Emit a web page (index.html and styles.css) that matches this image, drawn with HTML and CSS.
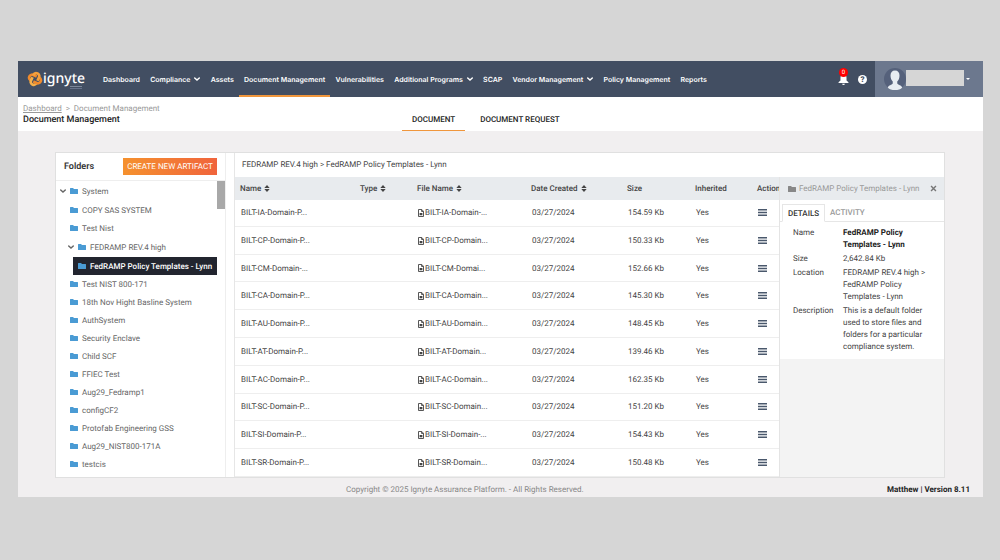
FILE: index.html
```html
<!DOCTYPE html>
<html lang="en">
<head>
    <meta charset="UTF-8">
    <meta name="viewport" content="width=device-width, initial-scale=1.0">
    <title>Document Management</title>
    <link rel="stylesheet" href="styles.css">
</head>
<body>
    <svg class="sprite" aria-hidden="true">
        <symbol id="folder" viewBox="0 0 16 12"><path d="M1 0h5l2 2h7a1 1 0 0 1 1 1v8a1 1 0 0 1-1 1H1a1 1 0 0 1-1-1V1a1 1 0 0 1 1-1z" fill="currentColor"/></symbol>
        <symbol id="chevron" viewBox="0 0 10 6"><path d="M1.200 1.200 5 4.600l3.800-3.400" fill="none" stroke="currentColor" stroke-width="2.400" stroke-linecap="round"/></symbol>
        <symbol id="sort" viewBox="0 0 10 12"><path d="M5 0l4.600 5H.4zM5 12L.4 7h9.200z" fill="currentColor"/></symbol>
        <symbol id="file" viewBox="0 0 12 16"><path d="M1 1h6.500L11 4.500V15H1zM7.200 1v4H11" fill="none" stroke="currentColor" stroke-width="1.800"/><path d="M3.200 8h5.600v4.500H3.200z" fill="currentColor"/></symbol>
        <symbol id="menu" viewBox="0 0 18 14"><path d="M0 1.500h18M0 7h18M0 12.500h18" stroke="currentColor" stroke-width="2.600"/></symbol>
    </svg>

    <div class="app">
        <header class="topbar">
            <a href="#" class="logo">
                <svg class="logo-mark" viewBox="0 0 30 30" fill="none" stroke-width="5">
                    <g transform="rotate(25 15 15)">
                        <path stroke="#f08a2c" d="M16 9.500H9a5.500 5.500 0 0 0-5.500 5.500c0 4 3 6 7 6"/>
                        <path stroke="#f5b04a" d="M9.500 14v7a5.500 5.500 0 0 0 5.500 5.500c4 0 6-3 6-7"/>
                        <path stroke="#f08a2c" d="M14 20.500h7a5.500 5.500 0 0 0 5.500-5.500c0-4-3-6-7-6"/>
                        <path stroke="#f5a03c" d="M20.500 16V9A5.500 5.500 0 0 0 15 3.500c-4 0-6 3-6 7"/>
                    </g>
                </svg>
                <span class="logo-name">ignyte<span class="logo-line"></span></span>
            </a>
            <nav class="nav">
                <a href="#">Dashboard</a>
                <a href="#">Compliance <svg class="chevron"><use href="#chevron"/></svg></a>
                <a href="#">Assets</a>
                <a href="#" class="active">Document Management</a>
                <a href="#">Vulnerabilities</a>
                <a href="#">Additional Programs <svg class="chevron"><use href="#chevron"/></svg></a>
                <a href="#">SCAP</a>
                <a href="#">Vendor Management <svg class="chevron"><use href="#chevron"/></svg></a>
                <a href="#">Policy Management</a>
                <a href="#">Reports</a>
            </nav>
            <div class="tools">
                <button class="bell" aria-label="Notifications">
                    <svg viewBox="0 0 20 20"><path d="M10 1c-4 0-5.500 3-5.500 6v5L1 15v1.500h18V15l-3.500-3V7c0-3-1.500-6-5.500-6zM7.500 17.500a2.500 2.500 0 0 0 5 0z" fill="#fff"/></svg>
                    <span class="badge">0</span>
                </button>
                <button class="help" aria-label="Help">?</button>
            </div>
            <button class="user" aria-label="Account">
                <svg class="avatar" viewBox="0 0 44 44">
                    <circle cx="22" cy="22" r="22" fill="#55617b"/>
                    <path d="M22 5c-6 0-9 4-9 10 0 5 1.500 9 4.500 12v4c-2 3-8 3-10 8 3 4 8 5 14.500 5s11.500-1 14.500-5c-2-5-8-5-10-8v-4c3-3 4.500-7 4.500-12 0-6-3-10-9-10z" fill="#e8edf2"/>
                </svg>
                <span class="user-name"></span>
                <span class="caret"></span>
            </button>
        </header>

        <div class="subbar">
            <div class="heading">
                <div class="crumbs"><a href="#">Dashboard</a> <span class="sep">&gt;</span> Document Management</div>
                <h1>Document Management</h1>
            </div>
            <div class="tabs">
                <button class="tab active">DOCUMENT</button>
                <button class="tab">DOCUMENT REQUEST</button>
            </div>
        </div>

        <main class="panel">
            <aside class="folders">
                <div class="folders-head">
                    <h2>Folders</h2>
                    <button class="create">CREATE NEW ARTIFACT</button>
                </div>
                <div class="tree-box">
                    <ul class="tree">
                        <li class="root open"><svg class="chevron"><use href="#chevron"/></svg><svg class="folder"><use href="#folder"/></svg>System</li>
                        <li><svg class="folder"><use href="#folder"/></svg>COPY SAS SYSTEM</li>
                        <li><svg class="folder"><use href="#folder"/></svg>Test Nist</li>
                        <li class="sub open"><svg class="chevron"><use href="#chevron"/></svg><svg class="folder"><use href="#folder"/></svg>FEDRAMP REV.4 high</li>
                        <li class="selected"><svg class="folder"><use href="#folder"/></svg>FedRAMP Policy Templates - Lynn</li>
                        <li><svg class="folder"><use href="#folder"/></svg>Test NIST 800-171</li>
                        <li><svg class="folder"><use href="#folder"/></svg>18th Nov Hight Basline System</li>
                        <li><svg class="folder"><use href="#folder"/></svg>AuthSystem</li>
                        <li><svg class="folder"><use href="#folder"/></svg>Security Enclave</li>
                        <li><svg class="folder"><use href="#folder"/></svg>Child SCF</li>
                        <li><svg class="folder"><use href="#folder"/></svg>FFIEC Test</li>
                        <li><svg class="folder"><use href="#folder"/></svg>Aug29_Fedramp1</li>
                        <li><svg class="folder"><use href="#folder"/></svg>configCF2</li>
                        <li><svg class="folder"><use href="#folder"/></svg>Protofab Engineering GSS</li>
                        <li><svg class="folder"><use href="#folder"/></svg>Aug29_NIST800-171A</li>
                        <li><svg class="folder"><use href="#folder"/></svg>testcis</li>
                    </ul>
                    <div class="scrollbar"></div>
                </div>
            </aside>

            <section class="content">
                <div class="path">FEDRAMP REV.4 high &gt; FedRAMP Policy Templates - Lynn</div>
                <div class="split">
                    <div class="table-box">
                        <table>
                            <colgroup>
                                <col class="c-name"><col class="c-type"><col class="c-file"><col class="c-date"><col class="c-size"><col class="c-inh"><col>
                            </colgroup>
                            <thead>
                                <tr>
                                    <th>Name <svg class="sort"><use href="#sort"/></svg></th>
                                    <th>Type <svg class="sort"><use href="#sort"/></svg></th>
                                    <th>File Name <svg class="sort"><use href="#sort"/></svg></th>
                                    <th>Date Created <svg class="sort"><use href="#sort"/></svg></th>
                                    <th>Size</th>
                                    <th>Inherited</th>
                                    <th>Action</th>
                                </tr>
                            </thead>
                            <tbody>
                                <tr><td>BILT-IA-Domain-P...</td><td></td><td><svg class="file"><use href="#file"/></svg>BILT-IA-Domain-...</td><td>03/27/2024</td><td>154.59 Kb</td><td>Yes</td><td><button class="menu" aria-label="Actions"><svg><use href="#menu"/></svg></button></td></tr>
                                <tr><td>BILT-CP-Domain-P...</td><td></td><td><svg class="file"><use href="#file"/></svg>BILT-CP-Domain...</td><td>03/27/2024</td><td>150.33 Kb</td><td>Yes</td><td><button class="menu" aria-label="Actions"><svg><use href="#menu"/></svg></button></td></tr>
                                <tr><td>BILT-CM-Domain-...</td><td></td><td><svg class="file"><use href="#file"/></svg>BILT-CM-Domai...</td><td>03/27/2024</td><td>152.66 Kb</td><td>Yes</td><td><button class="menu" aria-label="Actions"><svg><use href="#menu"/></svg></button></td></tr>
                                <tr><td>BILT-CA-Domain-P...</td><td></td><td><svg class="file"><use href="#file"/></svg>BILT-CA-Domain...</td><td>03/27/2024</td><td>145.30 Kb</td><td>Yes</td><td><button class="menu" aria-label="Actions"><svg><use href="#menu"/></svg></button></td></tr>
                                <tr><td>BILT-AU-Domain-P...</td><td></td><td><svg class="file"><use href="#file"/></svg>BILT-AU-Domain...</td><td>03/27/2024</td><td>148.45 Kb</td><td>Yes</td><td><button class="menu" aria-label="Actions"><svg><use href="#menu"/></svg></button></td></tr>
                                <tr><td>BILT-AT-Domain-P...</td><td></td><td><svg class="file"><use href="#file"/></svg>BILT-AT-Domain...</td><td>03/27/2024</td><td>139.46 Kb</td><td>Yes</td><td><button class="menu" aria-label="Actions"><svg><use href="#menu"/></svg></button></td></tr>
                                <tr><td>BILT-AC-Domain-P...</td><td></td><td><svg class="file"><use href="#file"/></svg>BILT-AC-Domain...</td><td>03/27/2024</td><td>162.35 Kb</td><td>Yes</td><td><button class="menu" aria-label="Actions"><svg><use href="#menu"/></svg></button></td></tr>
                                <tr><td>BILT-SC-Domain-P...</td><td></td><td><svg class="file"><use href="#file"/></svg>BILT-SC-Domain...</td><td>03/27/2024</td><td>151.20 Kb</td><td>Yes</td><td><button class="menu" aria-label="Actions"><svg><use href="#menu"/></svg></button></td></tr>
                                <tr><td>BILT-SI-Domain-P...</td><td></td><td><svg class="file"><use href="#file"/></svg>BILT-SI-Domain-...</td><td>03/27/2024</td><td>154.43 Kb</td><td>Yes</td><td><button class="menu" aria-label="Actions"><svg><use href="#menu"/></svg></button></td></tr>
                                <tr><td>BILT-SR-Domain-P...</td><td></td><td><svg class="file"><use href="#file"/></svg>BILT-SR-Domain...</td><td>03/27/2024</td><td>150.48 Kb</td><td>Yes</td><td><button class="menu" aria-label="Actions"><svg><use href="#menu"/></svg></button></td></tr>
                            </tbody>
                        </table>
                    </div>

                    <aside class="details">
                        <div class="details-head">
                            <svg class="folder"><use href="#folder"/></svg>
                            <span class="details-title">FedRAMP Policy Templates - Lynn</span>
                            <button class="close" aria-label="Close"><svg viewBox="0 0 10 10"><path d="M1.500 1.500l7 7M8.500 1.500l-7 7" stroke="#777" stroke-width="2"/></svg></button>
                        </div>
                        <div class="details-body">
                            <div class="details-tabs">
                                <button class="active">DETAILS</button>
                                <button>ACTIVITY</button>
                            </div>
                            <dl>
                                <dt>Name</dt><dd class="strong">FedRAMP Policy Templates - Lynn</dd>
                                <dt>Size</dt><dd>2,642.84 Kb</dd>
                                <dt>Location</dt><dd>FEDRAMP REV.4 high &gt; FedRAMP Policy Templates - Lynn</dd>
                                <dt>Description</dt><dd>This is a default folder used to store files and folders for a particular compliance system.</dd>
                            </dl>
                        </div>
                    </aside>
                </div>
            </section>
        </main>

        <footer class="footer">
            <span class="copyright">Copyright © 2025 Ignyte Assurance Platform. - All Rights Reserved.</span>
            <span class="version">Matthew | Version 8.11</span>
        </footer>
    </div>
</body>
</html>
```
FILE: styles.css
```css
* {
    box-sizing: border-box;
}
body {
    margin: 0;
    padding: 61px 17px 0 18px;
    background-color: #d6d6d6;
    font-family: Roboto, sans-serif;
    font-size: 8px;
    text-rendering: geometricPrecision;
    color: #444;
}
button {
    font-family: inherit;
    font-size: inherit;
    color: inherit;
    text-rendering: inherit;
    background: none;
    border: none;
    padding: 0;
    cursor: pointer;
}
h1, h2, ul, dl, dd {
    margin: 0;
    padding: 0;
}
.sprite {
    display: none;
}
.app {
    background-color: #f1eff0;
}

/* top bar */
.topbar {
    display: flex;
    height: 36px;
    background-color: #424e62;
    color: #fff;
}
.logo {
    display: flex;
    align-items: center;
    width: 80px;
    padding-left: 9px;
    color: #fff;
    text-decoration: none;
}
.logo-mark {
    width: 16px;
    height: 16px;
}
.logo-name {
    position: relative;
    font-family: "Noto Sans", sans-serif;
    font-size: 14px;
    font-weight: 500;
    line-height: 16px;
}
/* tagline under the logo, too small to read */
.logo-line {
    position: absolute;
    right: 3px;
    bottom: -2px;
    width: 12px;
    height: 3px;
    border-top: 1px solid #7c8799;
    border-bottom: 1px solid #66728a;
}
.nav {
    display: flex;
    justify-content: space-between;
    flex: 0 1 614px;
}
.nav a {
    display: flex;
    align-items: center;
    gap: 4px;
    padding: 2px 5px 0;
    border-bottom: 2px solid transparent;
    font-family: Inter, sans-serif;
    font-size: 7px;
    font-weight: 600;
    color: #fff;
    text-decoration: none;
    white-space: nowrap;
}
.nav a.active {
    border-color: #f0963c;
}
.chevron {
    width: 6px;
    height: 4px;
}
.tools {
    display: flex;
    align-items: center;
    gap: 9px;
    margin-left: auto;
    padding-right: 8px;
}
.bell {
    position: relative;
    height: 11px;
}
.bell svg {
    display: block;
    width: 11px;
    height: 11px;
}
.badge {
    position: absolute;
    top: -6px;
    left: 1px;
    width: 9px;
    height: 9px;
    border-radius: 50%;
    background-color: #f00;
    font-size: 6px;
    line-height: 9px;
    color: #fff;
}
.help {
    width: 9px;
    height: 9px;
    border-radius: 50%;
    background-color: #fff;
    color: #424e62;
    font-size: 8px;
    font-weight: 900;
    line-height: 9px;
}
.user {
    display: flex;
    align-items: center;
    width: 108px;
    padding-left: 9px;
    background-color: #6c788e;
}
.avatar {
    width: 22px;
    height: 22px;
}
.user-name {
    width: 58px;
    height: 16px;
    margin-bottom: 2px;
    background-color: #d6d6d6;
}
.caret {
    margin-left: 2px;
    border: 2px solid transparent;
    border-top-color: #fff;
    border-bottom: none;
}

/* title and page tabs */
.subbar {
    display: flex;
    height: 34px;
    background-color: #fff;
}
.heading {
    width: 384px;
    padding: 6px 0 0 5px;
}
.crumbs {
    line-height: 11px;
    color: #999;
}
.crumbs a {
    color: #999;
}
.sep {
    margin: 0 2px;
}
h1 {
    font-size: 9px;
    font-weight: 500;
    line-height: 12px;
    color: #222;
}
.tabs {
    display: flex;
    gap: 5px;
}
.tab {
    padding: 11px 10px 0;
    border-bottom: 1px solid transparent;
    font-weight: 500;
    color: #222;
}
.tab.active {
    border-color: #f0963c;
}

/* main panel */
.panel {
    display: flex;
    margin: 21px 38px 0 37px;
    border: 1px solid #e0e0e0;
    background-color: #fff;
}
.folders {
    width: 170px;
    border-right: 1px solid #eee;
}
.folders-head {
    display: flex;
    justify-content: space-between;
    align-items: center;
    height: 28px;
    padding: 0 8px;
    border-bottom: 1px solid #eee;
}
h2 {
    font-size: 9px;
    font-weight: 600;
    color: #333;
}
.create {
    width: 94px;
    height: 17px;
    background: linear-gradient(to right, #f5912e, #f0643c);
    color: #fff;
}
.tree-box {
    display: flex;
}
.tree {
    flex: 1;
    list-style: none;
}
.tree li {
    display: flex;
    align-items: center;
    gap: 4px;
    height: 18px;
    padding-left: 14px;
    color: #666;
}
.tree li.open {
    height: 20px;
}
.tree li.root {
    padding-left: 4px;
}
.tree li.sub {
    padding-left: 12px;
}
.tree li.selected {
    margin-left: 17px;
    padding-left: 5px;
    background-color: #22252f;
    color: #fff;
    font-weight: 500;
}
.folder {
    width: 8px;
    height: 6px;
    color: #4a9bd4;
}
.scrollbar {
    width: 8px;
    height: 28px;
    background-color: #a8a8a8;
}

/* documents */
.content {
    flex: 1;
    margin-left: 8px;
    border-left: 1px solid #e6e6e6;
}
.path {
    height: 24px;
    padding-left: 7px;
    line-height: 24px;
}
.split {
    display: flex;
}
.table-box {
    flex: 1;
    overflow: hidden;
}
table {
    width: 100%;
    height: 300px;
    table-layout: fixed;
    border-collapse: collapse;
}
.c-name {
    width: 120px;
}
.c-type {
    width: 57px;
}
.c-file {
    width: 114px;
}
.c-date {
    width: 96px;
}
.c-size {
    width: 68px;
}
.c-inh {
    width: 62px;
}
th {
    height: 23px;
    padding: 0 0 0 5px;
    background-color: #e8ebee;
    font-weight: 500;
    text-align: left;
    white-space: nowrap;
}
td {
    padding: 0 0 0 6px;
    border-bottom: 1px solid #eee;
    white-space: nowrap;
}
.sort {
    width: 6px;
    height: 7px;
    margin-left: 1px;
    vertical-align: middle;
}
.file {
    width: 6px;
    height: 8px;
    margin-right: 1px;
    vertical-align: middle;
}
.menu {
    display: block;
}
.menu svg {
    display: block;
    width: 9px;
    height: 7px;
    color: #4a586c;
}

/* details */
.details {
    width: 165px;
    border-left: 1px solid #e4e4e4;
    background-color: #f3f3f3;
}
.details-head {
    display: flex;
    align-items: center;
    height: 23px;
    padding: 0 7px 0 8px;
    background-color: #e8ebee;
    color: #999;
}
.details-head .folder {
    margin-right: 3px;
    color: #888;
}
.close {
    margin-left: auto;
}
.close svg {
    display: block;
    width: 7px;
    height: 7px;
}
.details-body {
    padding-top: 4px;
    background-color: #fff;
}
.details-tabs {
    display: flex;
    height: 18px;
    padding-left: 2px;
    border-bottom: 1px solid #e6e6e6;
    color: #999;
    font-weight: 500;
}
.details-tabs button {
    padding: 0 5px;
    font-weight: 500;
}
.details-tabs .active {
    height: 18px;
    border: 1px solid #e6e6e6;
    border-bottom-color: #fff;
    color: #333;
}
dl {
    display: grid;
    grid-template-columns: 50px 1fr;
    row-gap: 2px;
    padding: 5px 17px 6px 13px;
    line-height: 12px;
}
.strong {
    font-weight: 700;
    color: #222;
}

/* footer */
.footer {
    display: flex;
    align-items: center;
    justify-content: space-between;
    height: 19px;
    padding: 3px 13px 0 328px;
    color: #888;
}
.version {
    font-weight: 700;
    color: #222;
}
```
